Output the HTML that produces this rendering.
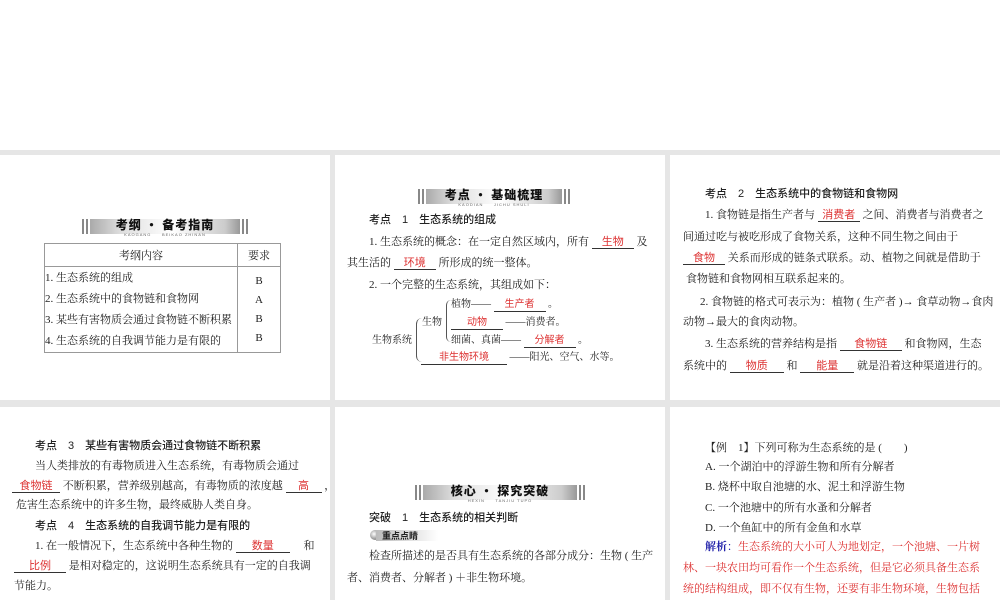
<!DOCTYPE html>
<html><head><meta charset="utf-8"><style>
body{margin:0;width:1000px;height:600px;background:#fff;position:relative;overflow:hidden;font-family:"Liberation Serif","Noto Serif CJK SC",serif;color:#222}
.g{position:absolute;left:0;top:150px;width:1000px;height:450px;background:#e6e6e6}
.p{position:absolute;background:#fff}
.t{position:absolute;font-size:11px;line-height:14px;white-space:nowrap}
.h{font-family:"Liberation Sans","Noto Sans CJK SC",sans-serif;font-weight:500}
.b{display:inline-block;border-bottom:1px solid #333;text-align:center;color:#d33;line-height:12px;font-family:"Liberation Sans","Noto Sans CJK SC",sans-serif}
.r{color:#d33}
.ban{position:absolute;height:17px}
.ban .bx{position:absolute;top:0;height:15px;background:linear-gradient(90deg,#aaa,#ddd 20%,#fff 55%,#ccc 90%,#999);}
.ban .l{position:absolute;top:0;width:2px;height:15px;background:#888}
.ban .tt{position:absolute;left:0;right:0;top:-1px;text-align:center;font-family:"Noto Sans CJK SC",sans-serif;font-weight:900;font-size:12px;line-height:14px;color:#111;letter-spacing:1px}
.ban .s{position:absolute;left:0;right:0;top:13px;text-align:center;font-size:4px;color:#666;letter-spacing:1px;font-family:"Liberation Sans",sans-serif}
table{position:absolute;border-collapse:collapse;font-size:11px}
td{border:1px solid #999;padding:0}
</style></head><body>
<div class="g"></div>
<div class="p" style="left:0;top:155px;width:330px;height:245px"></div>
<div class="p" style="left:335px;top:155px;width:330px;height:245px"></div>
<div class="p" style="left:670px;top:155px;width:330px;height:245px"></div>
<div class="p" style="left:0;top:407px;width:330px;height:193px"></div>
<div class="p" style="left:335px;top:407px;width:330px;height:193px"></div>
<div class="p" style="left:670px;top:407px;width:330px;height:193px"></div>

<!-- panel 1 -->
<div class="ban" style="left:82px;top:219px;width:166px"><div class="l" style="left:0"></div><div class="l" style="left:4px"></div><div class="bx" style="left:8px;right:8px"></div><div class="l" style="right:4px"></div><div class="l" style="right:0"></div><div class="tt">考纲 · 备考指南</div><div class="s">KAOGANG &nbsp; &nbsp; BEIKAO ZHINAN</div></div>
<table style="left:44px;top:243px;width:237px">
<tr style="height:23px"><td style="text-align:center;width:192px">考纲内容</td><td style="text-align:center">要求</td></tr>
<tr><td style="height:84px;vertical-align:top;line-height:21px;padding-top:1px;white-space:nowrap">1. 生态系统的组成<br>2. 生态系统中的食物链和食物网<br>3. 某些有害物质会通过食物链不断积累<br>4. 生态系统的自我调节能力是有限的</td><td style="text-align:center;vertical-align:top;line-height:19px;padding-top:5px">B<br>A<br>B<br>B</td></tr>
</table>

<!-- panel 2 -->
<div class="ban" style="left:418px;top:189px;width:152px"><div class="l" style="left:0"></div><div class="l" style="left:4px"></div><div class="bx" style="left:8px;right:8px"></div><div class="l" style="right:4px"></div><div class="l" style="right:0"></div><div class="tt">考点 · 基础梳理</div><div class="s">KAODIAN &nbsp; &nbsp; JICHU SHULI</div></div>
<div class="t h" style="left:369px;top:213px">考点　1　生态系统的组成</div>
<div class="t" style="left:369px;top:235px">1. 生态系统的概念：在一定自然区域内，所有 <span class="b" style="width:42px">生物</span> 及</div>
<div class="t" style="left:347px;top:256px">其生活的 <span class="b" style="width:42px">环境</span> 所形成的统一整体。</div>
<div class="t" style="left:369px;top:278px">2. 一个完整的生态系统，其组成如下：</div>
<div class="t" style="left:451px;top:298px;font-size:10px">植物—— <span class="b" style="width:52px">生产者</span> 。</div>
<div class="t" style="left:422px;top:316px;font-size:10px">生物</div>
<div class="t" style="left:451px;top:316px;font-size:10px"><span class="b" style="width:52px">动物</span> ——消费者。</div>
<div class="t" style="left:451px;top:334px;font-size:10px">细菌、真菌—— <span class="b" style="width:52px">分解者</span> 。</div>
<div class="t" style="left:372px;top:334px;font-size:10px">生物系统</div>
<div style="position:absolute;left:416px;top:318px;width:6px;height:44px;border-left:1px solid #555;border-radius:6px 0 0 6px"></div>
<div style="position:absolute;left:446px;top:300px;width:4px;height:42px;border-left:1px solid #555;border-radius:5px 0 0 5px"></div>
<div class="t" style="left:421px;top:351px;font-size:10px"><span class="b" style="width:86px">非生物环境</span> ——阳光、空气、水等。</div>

<!-- panel 3 -->
<div class="t h" style="left:705px;top:187px">考点　2　生态系统中的食物链和食物网</div>
<div class="t" style="left:705px;top:208px">1. 食物链是指生产者与 <span class="b" style="width:42px">消费者</span> 之间、消费者与消费者之</div>
<div class="t" style="left:683px;top:230px">间通过吃与被吃形成了食物关系，这种不同生物之间由于</div>
<div class="t" style="left:683px;top:251px"><span class="b" style="width:42px">食物</span> 关系而形成的链条式联系。动、植物之间就是借助于</div>
<div class="t" style="left:686px;top:272px">食物链和食物网相互联系起来的。</div>
<div class="t" style="left:700px;top:295px">2. 食物链的格式可表示为：植物 ( 生产者 )→ 食草动物→食肉</div>
<div class="t" style="left:683px;top:315px">动物→最大的食肉动物。</div>
<div class="t" style="left:705px;top:337px">3. 生态系统的营养结构是指 <span class="b" style="width:62px">食物链</span> 和食物网，生态</div>
<div class="t" style="left:683px;top:359px">系统中的 <span class="b" style="width:54px">物质</span> 和 <span class="b" style="width:54px">能量</span> 就是沿着这种渠道进行的。</div>

<!-- panel 4 -->
<div class="t h" style="left:35px;top:439px">考点　3　某些有害物质会通过食物链不断积累</div>
<div class="t" style="left:35px;top:459px">当人类排放的有毒物质进入生态系统，有毒物质会通过</div>
<div class="t" style="left:12px;top:479px"><span class="b" style="width:48px">食物链</span> 不断积累，营养级别越高，有毒物质的浓度越 <span class="b" style="width:36px">高</span> ，</div>
<div class="t" style="left:16px;top:498px">危害生态系统中的许多生物，最终威胁人类自身。</div>
<div class="t h" style="left:35px;top:519px">考点　4　生态系统的自我调节能力是有限的</div>
<div class="t" style="left:35px;top:539px">1. 在一般情况下，生态系统中各种生物的 <span class="b" style="width:54px">数量</span> 　和</div>
<div class="t" style="left:14px;top:559px"><span class="b" style="width:52px">比例</span> 是相对稳定的，这说明生态系统具有一定的自我调</div>
<div class="t" style="left:14px;top:579px">节能力。</div>

<!-- panel 5 -->
<div class="ban" style="left:415px;top:485px;width:170px"><div class="l" style="left:0"></div><div class="l" style="left:4px"></div><div class="bx" style="left:8px;right:8px"></div><div class="l" style="right:4px"></div><div class="l" style="right:0"></div><div class="tt">核心 · 探究突破</div><div class="s">HEXIN &nbsp; &nbsp; TANJIU TUPO</div></div>
<div class="t h" style="left:369px;top:511px">突破　1　生态系统的相关判断</div>
<div style="position:absolute;left:370px;top:530px;width:10px;height:10px;border-radius:50%;background:radial-gradient(circle at 40% 40%,#fff,#888 70%)"></div>
<div style="position:absolute;left:376px;top:530px;width:62px;height:11px;background:linear-gradient(90deg,#bbb,#fff)"></div>
<div class="t" style="left:382px;top:529px;font-size:9px;font-weight:bold;font-family:'Noto Sans CJK SC',sans-serif">重点点睛</div>
<div class="t" style="left:369px;top:549px">检查所描述的是否具有生态系统的各部分成分：生物 ( 生产</div>
<div class="t" style="left:347px;top:571px">者、消费者、分解者 ) ＋非生物环境。</div>

<!-- panel 6 -->
<div class="t" style="left:705px;top:441px">【例　1】下列可称为生态系统的是 (　　)</div>
<div class="t" style="left:705px;top:460px">A. 一个湖泊中的浮游生物和所有分解者</div>
<div class="t" style="left:705px;top:480px">B. 烧杯中取自池塘的水、泥土和浮游生物</div>
<div class="t" style="left:705px;top:501px">C. 一个池塘中的所有水蚤和分解者</div>
<div class="t" style="left:705px;top:521px">D. 一个鱼缸中的所有金鱼和水草</div>
<div class="t r" style="left:705px;top:540px"><span style="color:#22a;font-weight:bold">解析</span><span style="color:#22a">：</span>生态系统的大小可人为地划定，一个池塘、一片树</div>
<div class="t r" style="left:683px;top:561px">林、一块农田均可看作一个生态系统，但是它必须具备生态系</div>
<div class="t r" style="left:683px;top:582px">统的结构组成，即不仅有生物，还要有非生物环境，生物包括</div>
</body></html>
